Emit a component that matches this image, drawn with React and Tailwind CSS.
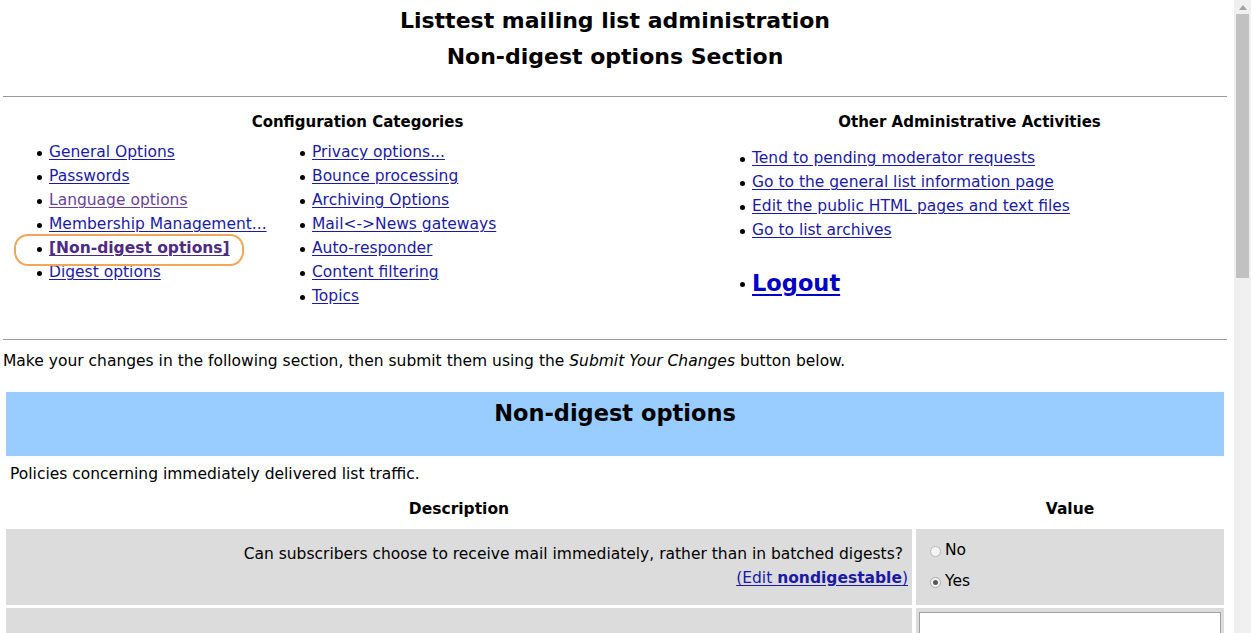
import React from "react";

const link = "text-[#1a1aa6] underline underline-offset-[2px]";

function Bullet({ children, className = "" }) {
  return (
    <li className={"flex items-center h-[24px] " + className}>
      <span className="w-[12px] flex-none flex items-center">
        <span className="block w-[5px] h-[5px] rounded-full bg-black" />
      </span>
      {children}
    </li>
  );
}

export default function App() {
  return (
    <div
      className="flex h-[633px] w-[1251px] overflow-hidden bg-white text-black text-[15.5px]"
      style={{ fontFamily: '"DejaVu Sans", Verdana, sans-serif' }}
    >
      <div className="flex-1 min-w-0 pl-[3px] pr-[7px]">
        {/* Title */}
        <div className="pt-[3px] text-center font-bold text-[22px] leading-[36px]">
          <div>Listtest mailing list administration</div>
          <div>Non-digest options Section</div>
        </div>
        <div className="mt-[21px] h-px bg-[#9a9a9a]" />

        {/* Categories */}
        <div className="flex">
          <div className="w-[709px]">
            <div className="text-center font-bold text-[15px] leading-[20px] mt-[15px]">
              Configuration Categories
            </div>
            <div className="flex mt-[9px]">
              <ul className="pl-[34px] w-[297px]">
                <Bullet><a className={link}>General Options</a></Bullet>
                <Bullet><a className={link}>Passwords</a></Bullet>
                <Bullet><a className="text-[#6b3f99] underline underline-offset-[2px]">Language options</a></Bullet>
                <Bullet><a className={link}>Membership Management...</a></Bullet>
                <Bullet className="relative">
                  <a className="text-[#4e2a84] font-bold underline underline-offset-[2px]">[Non-digest options]</a>
                  <span className="absolute left-[-23px] top-[-3px] w-[230px] h-[32px] rounded-[14px] border-2 border-[#f2a65a]" />
                </Bullet>
                <Bullet><a className={link}>Digest options</a></Bullet>
              </ul>
              <ul>
                <Bullet><a className={link}>Privacy options...</a></Bullet>
                <Bullet><a className={link}>Bounce processing</a></Bullet>
                <Bullet><a className={link}>Archiving Options</a></Bullet>
                <Bullet><a className={link}>Mail&lt;-&gt;News gateways</a></Bullet>
                <Bullet><a className={link}>Auto-responder</a></Bullet>
                <Bullet><a className={link}>Content filtering</a></Bullet>
                <Bullet><a className={link}>Topics</a></Bullet>
              </ul>
            </div>
          </div>
          <div className="flex-1">
            <div className="text-center font-bold text-[15px] leading-[20px] mt-[15px]">
              Other Administrative Activities
            </div>
            <ul className="pl-[28px] mt-[15px]">
              <Bullet><a className={link}>Tend to pending moderator requests</a></Bullet>
              <Bullet><a className={link}>Go to the general list information page</a></Bullet>
              <Bullet><a className={link}>Edit the public HTML pages and text files</a></Bullet>
              <Bullet><a className={link}>Go to list archives</a></Bullet>
              <li className="flex items-center h-[36px] mt-[23px]">
                <span className="w-[12px] flex-none flex items-center">
                  <span className="block w-[5px] h-[5px] rounded-full bg-black" />
                </span>
                <a className="text-[#0000c8] font-bold text-[22.5px] underline underline-offset-[3px]">Logout</a>
              </li>
            </ul>
          </div>
        </div>

        <div className="mt-[30px] h-px bg-[#9a9a9a]" />

        <p className="mt-[11px] leading-[20px]">
          Make your changes in the following section, then submit them using the{" "}
          <em>Submit Your Changes</em> button below.
        </p>

        <div className="mx-[3px] mt-[21px]">
          <div className="h-[64px] bg-[#99ccff] text-center font-bold text-[22.5px] leading-[42px]">
            Non-digest options
          </div>
          <div className="pl-[4px] mt-[8px] leading-[20px]">
            Policies concerning immediately delivered list traffic.
          </div>
          <div className="flex mt-[15px] font-bold leading-[20px]">
            <div className="w-[906px] text-center">Description</div>
            <div className="flex-1 text-center pl-[4px]">Value</div>
          </div>
          <div className="flex gap-[4px] mt-[10px]">
            <div className="w-[906px] h-[76px] bg-[#dcdcdc] text-right pr-[9px] pt-[15px] leading-[20px]">
              <div>Can subscribers choose to receive mail immediately, rather than in batched digests?</div>
              <div className="mt-[4px] mr-[-5px]">
                <a className={link}>(Edit <b>nondigestable</b>)</a>
              </div>
            </div>
            <div className="flex-1 h-[76px] bg-[#dcdcdc] pl-[14px] pt-[12px]">
              <div className="flex items-center h-[20px]">
                <span className="w-[11px] h-[11px] rounded-full border border-[#b8b8b8] bg-[#f4f4f4] mr-[4px]" />
                <span>No</span>
              </div>
              <div className="flex items-center h-[20px] mt-[11px]">
                <span className="w-[11px] h-[11px] rounded-full border border-[#a8a8a8] bg-[#f4f4f4] mr-[4px] flex items-center justify-center">
                  <span className="w-[5px] h-[5px] rounded-full bg-[#555]" />
                </span>
                <span>Yes</span>
              </div>
            </div>
          </div>
          <div className="flex gap-[4px] mt-[3px]">
            <div className="w-[906px] h-[40px] bg-[#dcdcdc]" />
            <div className="flex-1 h-[40px] bg-[#dcdcdc] pl-[3px] pt-[4px]">
              <div className="h-[40px] w-[302px] bg-white border border-[#a0a0a0]" />
            </div>
          </div>
        </div>
      </div>

      {/* Scrollbar */}
      <div className="w-[17px] flex-none bg-[#f0f0f0] flex flex-col items-center">
        <div className="h-[14px] flex items-center justify-center">
          <svg width="8" height="5" viewBox="0 0 8 5"><path d="M0 5 L4 0 L8 5 Z" fill="#a3a3a3" /></svg>
        </div>
        <div className="w-[13px] h-[264px] bg-[#c1c1c1]" />
      </div>
    </div>
  );
}
